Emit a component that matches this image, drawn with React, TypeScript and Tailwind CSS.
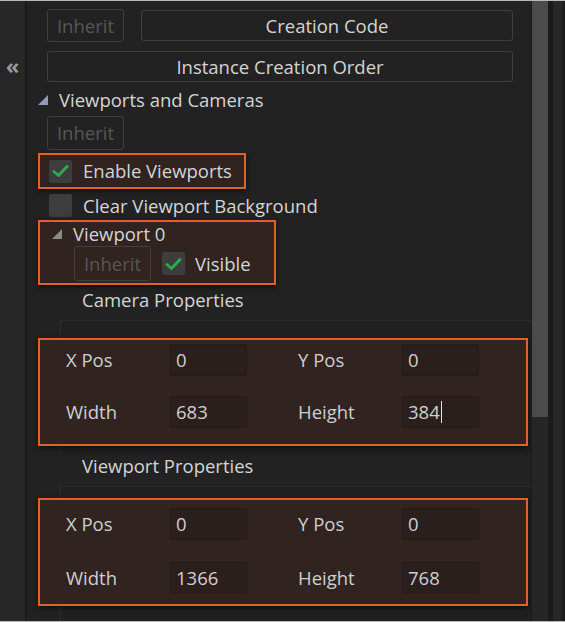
import React from "react";

const font = "font-['Open_Sans','Noto_Sans',sans-serif]";

function Check({ checked }: { checked: boolean }) {
  return (
    <div className="w-[23px] h-[23px] rounded-[2px] bg-[#3d3d3d] flex items-center justify-center shrink-0">
      {checked && (
        <svg width="17" height="14" viewBox="0 0 17 14">
          <path d="M2 7.5 L6.5 11.5 L15 2.5" fill="none" stroke="#2fa84f" strokeWidth="3" strokeLinecap="round" strokeLinejoin="round" />
        </svg>
      )}
    </div>
  );
}

function Tri({ color }: { color: string }) {
  return (
    <svg width="10" height="10" viewBox="0 0 10 10" className="shrink-0">
      <polygon points="10,0 10,10 0,10" fill={color} />
    </svg>
  );
}

function Inherit({ h = "h-[33px]" }: { h?: string }) {
  return (
    <div className={`w-[77px] ${h} rounded-[3px] border border-[#3f3f3f] flex items-center justify-center text-[#575757] shrink-0`}>
      Inherit
    </div>
  );
}

function Field({ v, cursor }: { v: string; cursor?: boolean }) {
  return (
    <div className="w-[77px] h-[32px] rounded-[2px] bg-[#2a1f1c] border border-[#261b18] flex items-center pl-[5px] text-[#cfcfcf]">
      {v}
      {cursor && <span className="inline-block w-[1.5px] h-[22px] bg-[#e6e6e6] ml-[1px]" />}
    </div>
  );
}

function PropBox({ vals, cursorIdx, spacing }: { vals: string[]; cursorIdx?: number; spacing: string }) {
  const labels = ["X Pos", "Y Pos", "Width", "Height"];
  const Row = ({ i }: { i: number }) => (
    <div className="flex items-center h-[32px]">
      <div className="w-[104px] text-[#cfcfcf]">{labels[i]}</div>
      <Field v={vals[i]} cursor={cursorIdx === i} />
      <div className="w-[51px]" />
      <div className="w-[104px] text-[#cfcfcf]">{labels[i + 1]}</div>
      <Field v={vals[i + 1]} cursor={cursorIdx === i + 1} />
    </div>
  );
  return (
    <div className={`-ml-[23px] w-[490px] h-[108px] border-2 border-[#e0622a] bg-[#302320] shadow-[0_2px_6px_rgba(0,0,0,0.6)] pl-[26px] flex flex-col ${spacing}`}>
      <Row i={0} />
      <Row i={2} />
    </div>
  );
}

export default function App() {
  return (
    <div className={`w-[565px] h-[622px] overflow-hidden flex flex-col bg-[#222222] ${font} text-[18.5px] leading-[24px]`}>
      <div className="h-px bg-[#b8b8b8] shrink-0" />
      <div className="flex flex-1 min-h-0">
        {/* left strip */}
        <div className="w-[25px] bg-[#272727] shrink-0 flex flex-col items-center">
          <div className="mt-[52px] text-[#9a9a9a] text-[22px] leading-[24px] font-bold">«</div>
        </div>
        <div className="w-[2px] bg-[#1a1a1a] shrink-0" />
        {/* main */}
        <div className="w-[504px] shrink-0 flex flex-col text-[#d4d4d4]">
          <div className="mt-[8px] flex items-center pl-[20px] pr-[18px] gap-[17px]">
            <Inherit />
            <div className="flex-1 h-[31px] rounded-[3px] border border-[#3f3f3f] flex items-center justify-center">
              Creation Code
            </div>
          </div>
          <div className="mt-[9px] ml-[20px] mr-[18px] h-[31px] rounded-[3px] border border-[#3f3f3f] flex items-center justify-center">
            Instance Creation Order
          </div>
          <div className="mt-[6px] h-[24px] flex items-center pl-[11px] gap-[11px]">
            <Tri color="#8e9db3" />
            <span>Viewports and Cameras</span>
          </div>
          <div className="mt-[4px] pl-[20px]">
            <Inherit h="h-[34px]" />
          </div>
          <div className="mt-[3px] ml-[11px] w-[208px] h-[36px] border-2 border-[#e0622a] bg-[#302320] shadow-[0_2px_5px_rgba(0,0,0,0.6)] flex items-center pl-[9px] gap-[11px]">
            <Check checked />
            <span>Enable Viewports</span>
          </div>
          <div className="mt-[5px] ml-[22px] h-[23px] flex items-center gap-[11px]">
            <Check checked={false} />
            <span>Clear Viewport Background</span>
          </div>
          <div className="mt-[3px] ml-[11px] w-[238px] h-[65px] border-2 border-[#e0622a] bg-[#302320] shadow-[0_2px_5px_rgba(0,0,0,0.6)] flex flex-col">
            <div className="h-[24px] flex items-center pl-[12px] gap-[11px]">
              <Tri color="#8a8a8a" />
              <span>Viewport 0</span>
            </div>
            <div className="flex items-center pl-[34px]">
              <Inherit h="h-[35px]" />
              <div className="ml-[11px]">
                <Check checked />
              </div>
              <span className="ml-[10px]">Visible</span>
            </div>
          </div>
          <div className="mt-[4px] h-[22px] flex items-center pl-[55px]">Camera Properties</div>
          <div className="mt-[9px] ml-[33px] bg-[#202020] border-t border-l border-[#2c2c2c] pt-[17px] pb-[8px]">
            <PropBox vals={["0", "0", "683", "384"]} cursorIdx={3} spacing="pt-[4px] gap-[20px]" />
          </div>
          <div className="mt-[1px] h-[22px] flex items-center pl-[55px]">Viewport Properties</div>
          <div className="mt-[9px] ml-[33px] flex-1 bg-[#202020] border-t border-l border-[#2c2c2c] pt-[11px]">
            <PropBox vals={["0", "0", "1366", "768"]} spacing="pt-[8px] gap-[22px]" />
          </div>
        </div>
        {/* scrollbar area */}
        <div className="w-px bg-[#1c1c1c] shrink-0" />
        <div className="w-[16px] bg-[#262626] shrink-0 flex flex-col">
          <div className="h-[416px] bg-[#4b4b4b]" />
        </div>
        <div className="w-[5px] bg-[#1b1b1b] shrink-0" />
        <div className="w-[9px] bg-[#272727] shrink-0" />
        <div className="flex-1 bg-[#1d1d1d]" />
      </div>
      <div className="h-px bg-[#b8b8b8] shrink-0" />
    </div>
  );
}
